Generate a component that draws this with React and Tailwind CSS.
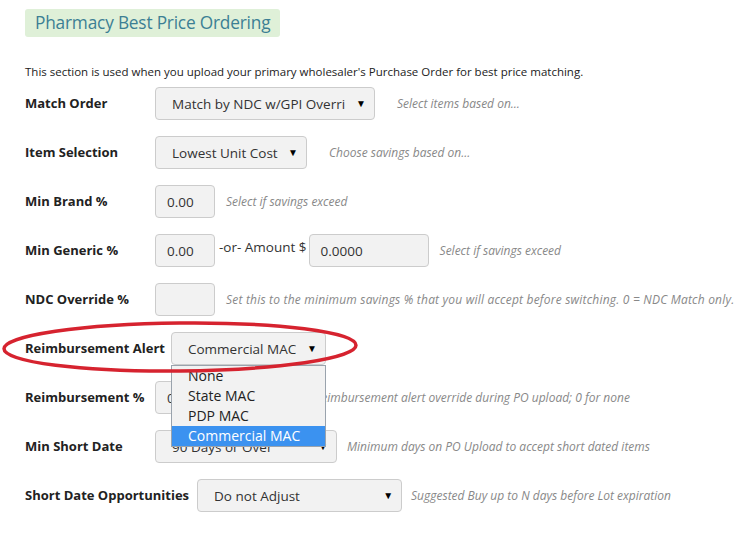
import React from 'react';

const label = "text-[13px] font-bold text-[#222] shrink-0";
const help = "text-[12px] italic text-[#888]";
const box = "h-[33px] border border-[#ccc] rounded-[4px] bg-[#f2f2f2] text-[13.5px] text-[#333] flex items-center";

function Select({ value, width, pl = 16, className = '' }) {
  return (
    <div className={`${box} justify-between pr-[8px] ${className}`} style={{ width, paddingLeft: pl }}>
      <span className="whitespace-nowrap overflow-hidden">{value}</span>
      <span className="text-[10px] text-black ml-2">▼</span>
    </div>
  );
}

function Input({ value, width = 60 }) {
  return (
    <div className={`${box} pl-[11px]`} style={{ width }}>
      {value}
    </div>
  );
}

function Row({ children }) {
  return <div className="flex items-center h-[33px]">{children}</div>;
}

export default function App() {
  return (
    <div className="relative w-[754px] h-[538px] bg-white overflow-hidden font-['Open_Sans','Noto_Sans',sans-serif]">
      <div className="pl-[25px] pt-[9px]">
        <div className="inline-flex items-center h-[28px] px-[10px] bg-[#dff0d8] rounded-[3px] text-[17.3px] text-[#3c7f94] tracking-[-0.2px]">
          Pharmacy Best Price Ordering
        </div>

        <p className="mt-[26px] text-[11.5px] text-[#222]">
          This section is used when you upload your primary wholesaler's Purchase Order for best price matching.
        </p>

        <div className="mt-[7px] flex flex-col gap-[16px]">
          <Row>
            <span className={`${label} w-[130px]`}>Match Order</span>
            <Select value="Match by NDC w/GPI Overri" width={220} />
            <span className={`${help} ml-[22px]`}>Select items based on...</span>
          </Row>
          <Row>
            <span className={`${label} w-[130px]`}>Item Selection</span>
            <Select value="Lowest Unit Cost" width={152} />
            <span className={`${help} ml-[22px]`}>Choose savings based on...</span>
          </Row>
          <Row>
            <span className={`${label} w-[130px]`}>Min Brand %</span>
            <Input value="0.00" />
            <span className={`${help} ml-[11px]`}>Select if savings exceed</span>
          </Row>
          <Row>
            <span className={`${label} w-[130px]`}>Min Generic %</span>
            <Input value="0.00" />
            <span className="text-[13.5px] text-[#333] ml-[4px] mr-[2px] self-start mt-[3px]">-or- Amount $</span>
            <Input value="0.0000" width={120} />
            <span className={`${help} ml-[11px]`}>Select if savings exceed</span>
          </Row>
          <Row>
            <span className={`${label} w-[130px]`}>NDC Override %</span>
            <Input value="" />
            <span className={`${help} ml-[11px] whitespace-nowrap tracking-[0.2px]`}>
              Set this to the minimum savings % that you will accept before switching. 0 = NDC Match only.
            </span>
          </Row>
          <Row>
            <span className={`${label} mr-[6px]`}>Reimbursement Alert</span>
            <div className="relative">
              <Select value="Commercial MAC" width={155} className="border-[#7fb0e6]" />
              <div className="absolute left-0 top-[33px] w-[155px] z-10 bg-[#f2f2f2] border border-[#9aa3ad] text-[14px] text-[#222] leading-[20px]">
                <div className="pl-[16px]">None</div>
                <div className="pl-[16px]">State MAC</div>
                <div className="pl-[16px]">PDP MAC</div>
                <div className="pl-[16px] bg-[#3b92f0] text-white">Commercial MAC</div>
              </div>
            </div>
          </Row>
          <Row>
            <span className={`${label} w-[130px]`}>Reimbursement %</span>
            <Input value="0" />
            <span className={`${help} ml-[11px]`}>Set default % for reimbursement alert override during PO upload; 0 for none</span>
          </Row>
          <Row>
            <span className={`${label} w-[130px]`}>Min Short Date</span>
            <Select value="90 Days or Over" width={182} />
            <span className={`${help} ml-[10px]`}>Minimum days on PO Upload to accept short dated items</span>
          </Row>
          <Row>
            <span className={`${label} mr-[8px]`}>Short Date Opportunities</span>
            <Select value="Do not Adjust" width={205} />
            <span className={`${help} ml-[9px]`}>Suggested Buy up to N days before Lot expiration</span>
          </Row>
        </div>
      </div>

      <svg className="absolute left-0 top-0 pointer-events-none z-20" width="754" height="538">
        <ellipse cx="180" cy="347" rx="176" ry="24" fill="none" stroke="#d6232f" strokeWidth="3.5" transform="rotate(-0.6 180 347)" />
      </svg>
    </div>
  );
}
